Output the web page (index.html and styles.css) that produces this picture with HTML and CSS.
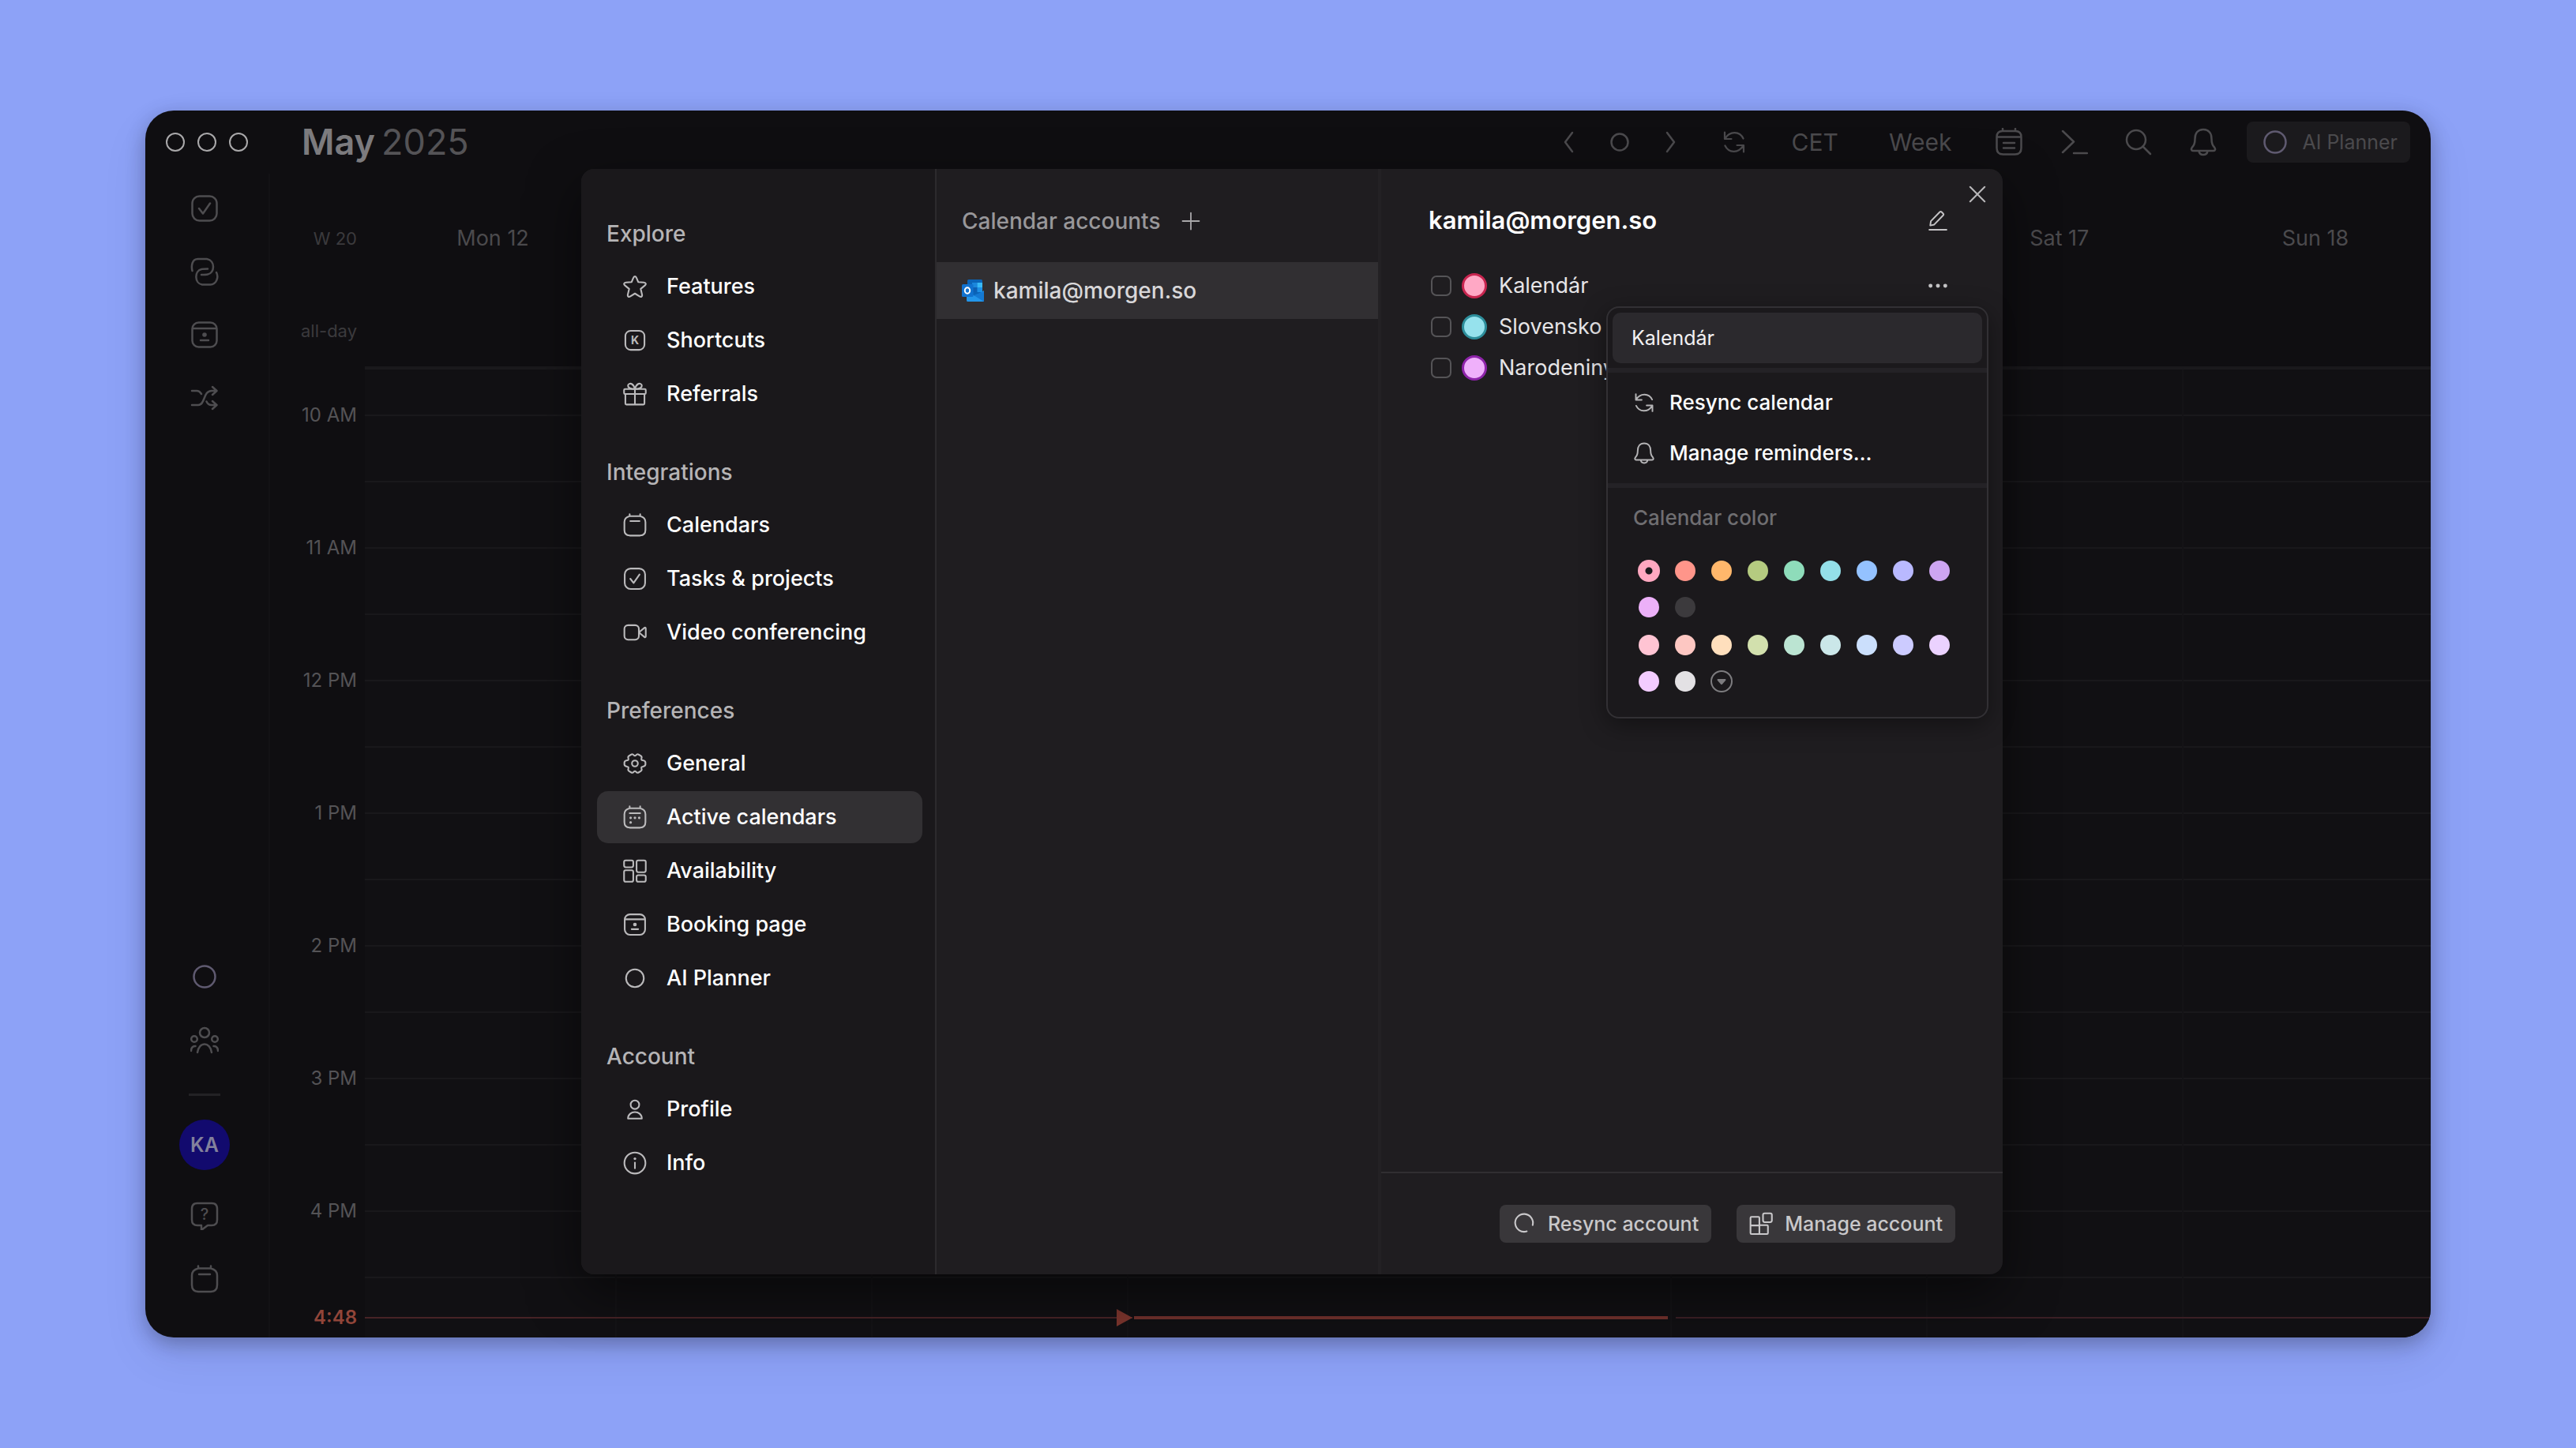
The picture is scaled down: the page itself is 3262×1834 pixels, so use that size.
FILE: index.html
```
<!DOCTYPE html>
<html lang="en">
<head>
    <meta charset="UTF-8">
    <meta name="viewport" content="width=device-width, initial-scale=1.0">
    <title>Active calendars - Morgen</title>
    <link rel="stylesheet" href="styles.css">
</head>
<body>
    <!-- Shared icons -->
    <svg class="sprite" aria-hidden="true">
        <symbol id="i-check" viewBox="0 0 36 36"><rect x="2.5" y="2.5" width="31" height="31" rx="9"/><path d="M11 18l5 6.5 9-13"/></symbol>
        <symbol id="i-link" viewBox="0 0 36 36"><path d="M2.500 17C1 11 2 2 9.500 2h11.500c11 2 10 18 1 19.500q-2 .5-8 .5M33 19c3.500 7-.5 15-7.500 15.500H15C5 33 5 17 14 15q2-.5 8-.5"/></symbol>
        <symbol id="i-booking" viewBox="0 0 36 36"><rect x="2.500" y="2.500" width="31" height="31" rx="8"/><path d="M3 10h30M13 25h10"/><circle class="dot" cx="18" cy="18" r="2.800"/></symbol>
        <symbol id="i-shuffle" viewBox="0 0 36 36"><path d="M2 9h6c3 0 4.500 1.500 6 4M2 27h8c9 0 6-18 17-18h6M28 4l5.500 5-5.500 5M20.500 22.500C22 26 24 27 27 27h6M28 22l5.500 5-5.500 5"/></symbol>
        <symbol id="i-ring" viewBox="0 0 36 36"><circle cx="18" cy="18" r="13.500"/></symbol>
        <symbol id="i-people" viewBox="0 0 36 36"><circle cx="18" cy="9" r="6"/><circle cx="5" cy="17" r="3.800"/><circle cx="31" cy="17" r="3.800"/><path d="M9 34c2-14 16-14 18 0M1 32c0-4 2-6 5.500-6M35 32c0-4-2-6-5.500-6"/></symbol>
        <symbol id="i-calendar" viewBox="0 0 36 36"><path d="M10 4.500h16q8 2 8 9v12q0 8-8 8.500H10q-8-.5-8-8.500v-12q0-7 8-9zM10 4.500V1.500M26 4.500V1.500M11 12h14"/></symbol>
        <symbol id="i-active" viewBox="0 0 36 36"><path d="M10 4.500h16q8 2 8 9v12q0 8-8 8.500H10q-8-.5-8-8.500v-12q0-7 8-9zM10 4.500V1.500M26 4.500V1.500M10 12h16"/><g class="dot"><circle cx="11.500" cy="19" r="1.900"/><circle cx="18" cy="19" r="1.900"/><circle cx="24.500" cy="19" r="1.900"/><circle cx="11.500" cy="26" r="1.900"/></g></symbol>
        <symbol id="i-left" viewBox="0 0 36 36"><path d="M22 6L13 18l9 12"/></symbol>
        <symbol id="i-right" viewBox="0 0 36 36"><path d="M14 6l9 12-9 12"/></symbol>
        <symbol id="i-dot" viewBox="0 0 36 36"><circle cx="18" cy="18" r="10.500"/></symbol>
        <symbol id="i-sync" viewBox="0 0 36 36"><path d="M4.500 4v9.500H14M5 13C12 1.500 26 2.500 31 13M31.500 32v-9.500H22M31 23C24 34.500 10 33.500 5 23"/></symbol>
        <symbol id="i-list" viewBox="0 0 36 36"><path d="M10 4h16q7.500 0 7.500 7.500v14q0 8-8 8h-15q-8 0-8-8v-14Q2.500 4 10 4zM10 4V1M26 4V1M3 11.500h30M11 19h14M11 25.500h14"/></symbol>
        <symbol id="i-terminal" viewBox="0 0 36 36"><path d="M4 4l14 13.500L4 31M18 32h17"/></symbol>
        <symbol id="i-search" viewBox="0 0 36 36"><circle cx="15" cy="15" r="12"/><path d="M23.500 23.500L33 33"/></symbol>
        <symbol id="i-bell" viewBox="0 0 36 36"><path d="M18 2C11 2 7.500 7 7.500 14c0 6-1 8-3.500 10.500-2 2.500-1 4.500 1 4.500h26c2 0 3-2 1-4.500C29.500 22 28.500 20 28.500 14 28.500 7 25 2 18 2zM12.500 29.500c1 6 10 6 11 0"/></symbol>
        <symbol id="i-star" viewBox="0 0 36 36"><path d="M18 2.500c1.500 0 2 1 2.500 2.500L23 11l8.500.8c3.500.4 4 2.400 1.500 4.600L26.800 21.500l2 8.500c.7 3-1.300 4.300-3.800 2.800L18 28.500l-7 4.300c-2.500 1.500-4.500.2-3.800-2.800l2-8.500L3 16.400C.5 14.200 1 12.200 4.500 11.800L13 11l2.500-6C16 3.500 16.500 2.500 18 2.500z"/></symbol>
        <symbol id="i-gift" viewBox="0 0 36 36"><rect x="1.500" y="10.500" width="33" height="7.500" rx="1.500"/><path d="M3.500 18v14.500q0 1.500 1.500 1.500h26q1.500 0 1.500-1.500V18M18 10.500V34M18 10.500C12 10.500 7.500 9 7.500 5.500 7.500 2.500 11 1.500 13.500 3 16 4.500 17 7 18 10.500zM18 10.500c6 0 10.500-1.500 10.500-5C28.500 2.500 25 1.500 22.500 3 20 4.500 19 7 18 10.500z"/></symbol>
        <symbol id="i-video" viewBox="0 0 36 36"><rect x="2" y="7" width="22" height="22" rx="5.500"/><path d="M24 18l8.500-7c1-.8 2-.5 2 1v12c0 1.500-1 1.800-2 1z"/></symbol>
        <symbol id="i-gear" viewBox="0 0 36 36"><path d="M12.200 4.500c1.600-1 3-.5 4 .8q1.800 2 3.600 0c1-1.300 2.400-1.800 4-.8l3.200 1.900c1.500 1 1.600 2.300 1 3.900q-.8 2.700 1.900 3c2 .3 3.900.8 4.100 3v3.400c-.2 2.200-2.100 2.700-4.100 3q-2.700.3-1.900 3c.6 1.600.5 2.900-1 3.900l-3.200 1.900c-1.600 1-3 .5-4-.8q-1.800-2-3.600 0c-1 1.300-2.400 1.800-4 .8L9 29.600c-1.500-1-1.600-2.300-1-3.900q.8-2.700-1.900-3c-2-.3-3.900-.8-4.100-3v-3.400c.2-2.200 2.100-2.700 4.100-3q2.700-.3 1.900-3c-.6-1.600-.5-2.900 1-3.900z"/><circle cx="18" cy="18" r="4.500"/></symbol>
        <symbol id="i-blocks" viewBox="0 0 36 36"><rect x="1.500" y="2" width="14" height="10.500" rx="2.500"/><rect x="20.500" y="2" width="14" height="18" rx="2.500"/><rect x="1.500" y="17" width="14" height="17.500" rx="2.500"/><rect x="20.500" y="24.500" width="14" height="10" rx="2.500"/></symbol>
        <symbol id="i-user" viewBox="0 0 36 36"><circle cx="18" cy="11" r="6.500"/><path d="M7.500 32c0-13 21-13 21 0z"/></symbol>
        <symbol id="i-info" viewBox="0 0 36 36"><circle cx="18" cy="18" r="16"/><path d="M18 17.500V26"/><circle class="dot" cx="18" cy="11.500" r="2"/></symbol>
        <symbol id="i-pencil" viewBox="0 0 36 36"><path d="M6.500 19.500L21 4.500q1.500-1.500 3 0l2.500 2.500q1.500 1.500 0 3L12 25l-6.500 1.500zM4 33.500h28"/></symbol>
        <symbol id="i-close" viewBox="0 0 36 36"><path d="M7 7l22 22M29 7L7 29"/></symbol>
        <symbol id="i-plus" viewBox="0 0 36 36"><path d="M18 3.500v29M3.500 18h29"/></symbol>
        <symbol id="i-more" viewBox="0 0 36 36"><g class="dot"><circle cx="6" cy="18" r="3.200"/><circle cx="18" cy="18" r="3.200"/><circle cx="30" cy="18" r="3.200"/></g></symbol>
        <symbol id="i-arc" viewBox="0 0 36 36"><path d="M31 20A13.500 13.500 0 1 0 22 29.500"/></symbol>
        <symbol id="i-manage" viewBox="0 0 36 36"><path d="M2 9q0-1.500 1.500-1.500H14q1.500 0 1.500 1.500v11H27q1.500 0 1.500 1.500V32q0 1.500-1.500 1.500H3.500Q2 33.500 2 32zM2 20.500h13.500v13"/><rect x="21" y="2" width="13.500" height="13.500" rx="2.500"/></symbol>
    </svg>

    <div class="window">
        <header class="topbar">
            <div class="lights"><span></span><span></span><span></span></div>
            <h1 class="month">May <span>2025</span></h1>
            <div class="toolbar">
                <button class="step" type="button" aria-label="Previous"><svg class="icon"><use href="#i-left"/></svg></button>
                <button class="step" type="button" aria-label="Today"><svg class="icon"><use href="#i-dot"/></svg></button>
                <button class="step" type="button" aria-label="Next"><svg class="icon"><use href="#i-right"/></svg></button>
                <button class="tool sync" type="button" aria-label="Sync"><svg class="icon"><use href="#i-sync"/></svg></button>
                <button class="pick" type="button">CET</button>
                <button class="pick" type="button">Week</button>
                <button class="tool" type="button" aria-label="Tasks"><svg class="icon"><use href="#i-list"/></svg></button>
                <button class="tool" type="button" aria-label="Commands"><svg class="icon"><use href="#i-terminal"/></svg></button>
                <button class="tool" type="button" aria-label="Search"><svg class="icon"><use href="#i-search"/></svg></button>
                <button class="tool" type="button" aria-label="Notifications"><svg class="icon"><use href="#i-bell"/></svg></button>
                <button class="planner" type="button"><svg class="icon tinted"><use href="#i-ring"/></svg>AI Planner</button>
            </div>
        </header>

        <div class="main">
            <nav class="rail">
                <a href="#" aria-label="Tasks"><svg class="icon"><use href="#i-check"/></svg></a>
                <a href="#" aria-label="Links"><svg class="icon"><use href="#i-link"/></svg></a>
                <a href="#" aria-label="Booking"><svg class="icon"><use href="#i-booking"/></svg></a>
                <a href="#" aria-label="Workflows"><svg class="icon"><use href="#i-shuffle"/></svg></a>
                <a class="bottom" href="#" aria-label="AI Planner"><svg class="icon tinted"><use href="#i-ring"/></svg></a>
                <a href="#" aria-label="Team"><svg class="icon"><use href="#i-people"/></svg></a>
                <hr>
                <a class="avatar" href="#">KA</a>
                <a href="#" aria-label="Help"><svg class="icon" viewBox="0 0 36 36"><path d="M9 2h18q7 0 7 7v14q0 7-7 7h-5l-8 6v-6H9q-7 0-7-7V9q0-7 7-7z"/><text x="18" y="23" text-anchor="middle">?</text></svg></a>
                <a href="#" aria-label="Calendar"><svg class="icon"><use href="#i-calendar"/></svg></a>
            </nav>

            <div class="calendar">
                <div class="week days">
                    <span class="gutter">W 20</span>
                    <div class="columns">
                        <span>Mon 12</span><span></span><span></span><span></span><span></span><span>Sat 17</span><span>Sun 18</span>
                    </div>
                </div>
                <div class="week allday">
                    <span class="gutter">all-day</span>
                    <div class="columns"></div>
                </div>
                <div class="week hours">
                    <div class="gutter">
                        <span>10 AM</span>
                        <span>11 AM</span>
                        <span>12 PM</span>
                        <span>1 PM</span>
                        <span>2 PM</span>
                        <span>3 PM</span>
                        <span>4 PM</span>
                    </div>
                    <div class="columns slots">
                        <i></i><i></i><i></i><i></i><i></i><i></i><i></i>
                    </div>
                    <div class="now">
                        <span class="gutter">4:48</span>
                        <div class="columns">
                            <i class="before"></i><i class="current"></i><i class="after"></i>
                        </div>
                    </div>
                </div>
            </div>
        </div>

        <!-- Settings dialog -->
        <div class="overlay">
            <div class="modal" role="dialog" aria-label="Settings">
                <nav class="settings">
                    <section>
                        <h2>Explore</h2>
                        <a href="#"><svg class="icon"><use href="#i-star"/></svg>Features</a>
                        <a href="#"><svg class="icon key" viewBox="0 0 36 36"><rect x="3.500" y="3.500" width="29" height="29" rx="8"/><text x="18" y="24" text-anchor="middle">K</text></svg>Shortcuts</a>
                        <a href="#"><svg class="icon"><use href="#i-gift"/></svg>Referrals</a>
                    </section>
                    <section>
                        <h2>Integrations</h2>
                        <a href="#"><svg class="icon"><use href="#i-calendar"/></svg>Calendars</a>
                        <a href="#"><svg class="icon"><use href="#i-check"/></svg>Tasks &amp; projects</a>
                        <a href="#"><svg class="icon"><use href="#i-video"/></svg>Video conferencing</a>
                    </section>
                    <section>
                        <h2>Preferences</h2>
                        <a href="#"><svg class="icon"><use href="#i-gear"/></svg>General</a>
                        <a class="active" href="#"><svg class="icon"><use href="#i-active"/></svg>Active calendars</a>
                        <a href="#"><svg class="icon"><use href="#i-blocks"/></svg>Availability</a>
                        <a href="#"><svg class="icon"><use href="#i-booking"/></svg>Booking page</a>
                        <a href="#"><svg class="icon"><use href="#i-ring"/></svg>AI Planner</a>
                    </section>
                    <section>
                        <h2>Account</h2>
                        <a href="#"><svg class="icon"><use href="#i-user"/></svg>Profile</a>
                        <a href="#"><svg class="icon"><use href="#i-info"/></svg>Info</a>
                    </section>
                </nav>

                <div class="accounts">
                    <div class="accounts-head">
                        <h2>Calendar accounts</h2>
                        <button type="button" aria-label="Add account"><svg class="icon"><use href="#i-plus"/></svg></button>
                    </div>
                    <a class="account" href="#">
                        <svg class="outlook" viewBox="0 0 28 28">
                            <rect x="7" y="0" width="19" height="22" rx="1.500" fill="#0a64b8"/>
                            <path d="M13 4h6.500v6H13z" fill="#1b87dc"/>
                            <path d="M19.500 4H26v6h-6.500z" fill="#38b9f6"/>
                            <path d="M13 10h6.500v6H13z" fill="#0d5fb3"/>
                            <path d="M19.500 10H26v6h-6.500z" fill="#1d90e6"/>
                            <path d="M6 15l11 6 11-7v12.500q0 1.500-1.500 1.500h-19Q6 28 6 26.500z" fill="#2396ea"/>
                            <path d="M15 20l13 8V15z" fill="#1479d2"/>
                            <rect x="0" y="6" width="14.500" height="16" rx="1.500" fill="#1172cf"/>
                            <ellipse cx="7" cy="14" rx="3.200" ry="3.800" fill="none" stroke="#fff" stroke-width="2"/>
                        </svg>
                        kamila@morgen.so
                    </a>
                </div>

                <div class="detail">
                    <button class="close" type="button" aria-label="Close"><svg class="icon"><use href="#i-close"/></svg></button>
                    <div class="detail-head">
                        <h2>kamila@morgen.so</h2>
                        <button type="button" aria-label="Rename"><svg class="icon"><use href="#i-pencil"/></svg></button>
                    </div>
                    <ul class="calendars">
                        <li>
                            <input type="checkbox" id="cal-1">
                            <span class="swatch pink"></span>
                            <label for="cal-1">Kalendár</label>
                            <button type="button" aria-label="More"><svg class="icon"><use href="#i-more"/></svg></button>
                        </li>
                        <li>
                            <input type="checkbox" id="cal-2">
                            <span class="swatch teal"></span>
                            <label for="cal-2">Slovensko</label>
                        </li>
                        <li>
                            <input type="checkbox" id="cal-3">
                            <span class="swatch purple"></span>
                            <label for="cal-3">Narodeniny</label>
                        </li>
                    </ul>
                    <div class="menu">
                        <div class="menu-name"><input type="text" value="Kalendár" aria-label="Calendar name"></div>
                        <div class="menu-actions">
                            <button type="button"><svg class="icon"><use href="#i-sync"/></svg>Resync calendar</button>
                            <button type="button"><svg class="icon"><use href="#i-bell"/></svg>Manage reminders…</button>
                        </div>
                        <div class="menu-colors">
                            <h3>Calendar color</h3>
                            <div class="palette">
                                <button class="c1 selected" type="button" aria-label="Pink"></button>
                                <button class="c2" type="button" aria-label="Coral"></button>
                                <button class="c3" type="button" aria-label="Orange"></button>
                                <button class="c4" type="button" aria-label="Olive"></button>
                                <button class="c5" type="button" aria-label="Green"></button>
                                <button class="c6" type="button" aria-label="Teal"></button>
                                <button class="c7" type="button" aria-label="Blue"></button>
                                <button class="c8" type="button" aria-label="Indigo"></button>
                                <button class="c9" type="button" aria-label="Violet"></button>
                                <button class="c10" type="button" aria-label="Purple"></button>
                                <button class="c11" type="button" aria-label="Graphite"></button>
                            </div>
                            <div class="palette">
                                <button class="l1" type="button" aria-label="Light pink"></button>
                                <button class="l2" type="button" aria-label="Light coral"></button>
                                <button class="l3" type="button" aria-label="Light orange"></button>
                                <button class="l4" type="button" aria-label="Light olive"></button>
                                <button class="l5" type="button" aria-label="Light green"></button>
                                <button class="l6" type="button" aria-label="Light teal"></button>
                                <button class="l7" type="button" aria-label="Light blue"></button>
                                <button class="l8" type="button" aria-label="Light indigo"></button>
                                <button class="l9" type="button" aria-label="Light violet"></button>
                                <button class="l10" type="button" aria-label="Light purple"></button>
                                <button class="l11" type="button" aria-label="Light gray"></button>
                                <button class="custom" type="button" aria-label="Custom color"><svg viewBox="0 0 28 28"><circle cx="14" cy="14" r="13"/><path d="M9 11h10q1 1 0 2l-4 4.500q-1 1-2 0L9 13q-1-1 0-2z"/></svg></button>
                            </div>
                        </div>
                    </div>
                    <footer class="detail-foot">
                        <button type="button"><svg class="icon"><use href="#i-arc"/></svg>Resync account</button>
                        <button type="button"><svg class="icon"><use href="#i-manage"/></svg>Manage account</button>
                    </footer>
                </div>
            </div>
        </div>
    </div>
</body>
</html>
```
FILE: styles.css
```
* {
    box-sizing: border-box;
}

body {
    margin: 0;
    min-height: 100vh;
    padding: 140px 184px;
    display: flex;
    background-color: #8da2f7;
    color: #fff;
    font-family: Inter, "Liberation Sans", sans-serif;
    font-size: 27px;
    line-height: 32px;
}

h1, h2, h3, ul {
    margin: 0;
    padding: 0;
}

a {
    color: inherit;
    text-decoration: none;
}

button {
    display: flex;
    align-items: center;
    justify-content: center;
    padding: 0;
    border: none;
    background: none;
    color: inherit;
    font: inherit;
    cursor: pointer;
}

.sprite {
    position: absolute;
    width: 0;
    height: 0;
}

.icon {
    width: 36px;
    height: 36px;
    flex: none;
    fill: none;
    stroke: currentColor;
    stroke-width: 2.5;
    stroke-linecap: round;
    stroke-linejoin: round;
}

.dot, .icon text {
    fill: currentColor;
    stroke: none;
}

.icon text {
    font-size: 20px;
    font-weight: 500;
}

.key text {
    font-size: 17px;
    font-weight: 700;
}

.tinted {
    color: #5f5a70;
}

.window {
    position: relative;
    flex: 1;
    display: flex;
    flex-direction: column;
    border-radius: 36px;
    background-color: #0f0e11;
    box-shadow: 0 8px 24px rgba(20, 20, 40, 0.3), 0 24px 60px rgba(20, 20, 40, 0.08);
}

/* Top bar */
.topbar {
    display: flex;
    align-items: center;
    height: 80px;
    padding: 0 26px;
    color: #4b4a4d;
}

.lights {
    display: flex;
    gap: 16px;
}

.lights span {
    width: 24px;
    height: 24px;
    border: 2px solid #aaa9ab;
    border-radius: 50%;
}

.month {
    display: flex;
    gap: 8px;
    margin-left: 68px;
    color: #7c7b7e;
    font-size: 45px;
    font-weight: 600;
    line-height: 56px;
}

.month span {
    color: #545356;
    font-weight: 400;
}

.toolbar {
    display: flex;
    align-items: center;
    margin-left: auto;
}

.step {
    width: 64px;
}

.tool {
    width: 82px;
}

.sync {
    margin: 0 32px 0 8px;
}

.sync .icon {
    width: 32px;
    height: 32px;
}

.pick {
    margin-right: 64px;
    font-size: 30px;
}

.pick + .tool {
    margin-left: -32px;
}

.planner {
    gap: 16px;
    height: 52px;
    margin-left: 14px;
    padding: 0 16px 0 18px;
    border-radius: 8px;
    background-color: #1b1a1d;
    font-size: 25px;
}

/* Left rail */
.main {
    flex: 1;
    display: flex;
    min-height: 0;
}

.rail {
    display: flex;
    flex-direction: column;
    align-items: center;
    width: 158px;
    padding: 4px 6px 34px 0;
    border-right: 2px solid #131215;
    color: #4e4d50;
}

.rail a {
    display: flex;
    align-items: center;
    justify-content: center;
    width: 80px;
    height: 80px;
}

.rail .bottom {
    margin-top: auto;
}

.rail hr {
    width: 40px;
    height: 3px;
    margin: 28px 0 30px;
    border: none;
    background-color: #232225;
}

.rail .avatar {
    width: 64px;
    height: 64px;
    margin-bottom: 18px;
    border-radius: 50%;
    background-color: #120a6e;
    color: #83819c;
    font-size: 25px;
    font-weight: 600;
}

/* Calendar behind the dialog */
.calendar {
    flex: 1;
    display: flex;
    flex-direction: column;
    overflow: hidden;
    border-radius: 0 0 36px 0;
}

.week {
    display: flex;
}

.gutter {
    width: 120px;
    flex: none;
    padding-right: 10px;
    color: #3b3a3d;
    font-size: 22px;
    text-align: right;
}

.columns {
    flex: 1;
    display: grid;
    grid-template-columns: 1fr 1fr 1fr 2.12fr 1fr 1fr 1fr;
    margin-right: -16px;
}

.days {
    align-items: center;
    height: 164px;
    color: #4b4a4d;
    text-align: center;
}

.allday {
    height: 84px;
}

.allday .gutter {
    padding-top: 19px;
}

.allday .columns {
    border-bottom: 4px solid #1a191c;
}

.hours {
    position: relative;
    flex: 1;
}

.hours .gutter {
    padding-top: 42px;
    color: #545356;
    font-size: 24px;
}

.hours .gutter span {
    display: block;
    margin-bottom: 136px;
}

.slots {
    background: #111013 linear-gradient(#19181b 2px, transparent 2px) 0 57px / 100% 84px;
}

.slots i {
    margin-right: 5px;
    border-right: 2px solid #141316;
}

.now {
    position: absolute;
    top: 1185px;
    left: 0;
    right: 0;
    display: flex;
    align-items: center;
}

.hours .now .gutter {
    padding-top: 0;
    color: #914539;
    font-weight: 600;
}

.now .columns {
    align-items: center;
}

.before {
    grid-column: span 3;
    display: flex;
    align-items: center;
    height: 2px;
    background-color: #472326;
}

.before::after {
    content: "";
    margin-left: auto;
    border: 11px solid transparent;
    border-left: 20px solid #7b352d;
    border-right: none;
}

.current {
    height: 4px;
    margin: 0 10px 0 2px;
    background-color: #6f302c;
}

.after {
    grid-column: span 3;
    height: 2px;
    background-color: #3b1f25;
}

/* Dialog */
.overlay {
    position: absolute;
    inset: 0;
    display: flex;
    padding: 74px 542px 80px 552px;
}

.modal {
    flex: 1;
    display: grid;
    grid-template-columns: 450px 563px 1fr;
    border-radius: 16px;
    background-color: #1f1d20;
    box-shadow: 0 24px 64px rgba(0, 0, 0, 0.5);
}

.settings {
    display: flex;
    flex-direction: column;
    gap: 30px;
    padding: 48px 16px 0 20px;
    border-right: 2px solid #2c2a2d;
    border-radius: 16px 0 0 16px;
    background-color: #1a181b;
    font-weight: 500;
}

.settings h2 {
    height: 68px;
    padding: 18px 12px;
    color: #b5b4b6;
    font-size: 28px;
    font-weight: 500;
}

.settings a {
    display: flex;
    align-items: center;
    gap: 25px;
    height: 66px;
    margin-bottom: 2px;
    padding-left: 33px;
    border-radius: 14px;
}

.settings .active {
    background-color: #323033;
}

.settings .icon {
    width: 30px;
    height: 30px;
    color: #bbbabc;
}

.accounts {
    border-right: 4px solid #232124;
}

.accounts-head {
    display: flex;
    align-items: center;
    gap: 26px;
    height: 118px;
    padding: 13px 32px 0;
    color: #98979a;
}

.accounts-head h2 {
    font-size: 28px;
    font-weight: 500;
}

.accounts-head .icon {
    width: 26px;
    height: 26px;
    color: #a9a8aa;
}

.account {
    display: flex;
    align-items: center;
    gap: 12px;
    height: 72px;
    padding: 0 32px;
    background-color: #312f32;
    color: #d8d7d9;
    font-size: 28px;
    font-weight: 500;
}

.outlook {
    width: 28px;
    height: 28px;
}

.detail {
    position: relative;
    display: flex;
    flex-direction: column;
    padding-top: 40px;
}

.close {
    position: absolute;
    top: 16px;
    right: 16px;
    width: 32px;
    height: 32px;
    color: #b9b8ba;
}

.close .icon {
    width: 30px;
    height: 30px;
}

.detail-head {
    display: flex;
    align-items: center;
    justify-content: space-between;
    height: 50px;
    padding: 0 68px 0 60px;
}

.detail-head h2 {
    font-size: 31px;
    font-weight: 600;
}

.detail-head .icon, .calendars .icon {
    width: 28px;
    height: 28px;
    color: #c4c3c5;
}

.calendars {
    margin-top: 32px;
    padding: 0 68px 0 63px;
    list-style: none;
}

.calendars li {
    display: flex;
    align-items: center;
    height: 52px;
    color: #e6e5e7;
}

.calendars input {
    appearance: none;
    width: 26px;
    height: 26px;
    margin: 0 13px 0 0;
    border: 2px solid #555457;
    border-radius: 7px;
}

.calendars button {
    margin-left: auto;
}

.swatch {
    width: 32px;
    height: 32px;
    margin-right: 15px;
    border: 3px solid;
    border-radius: 50%;
}

.pink {
    border-color: #c8254f;
    background-color: #ffa8c5;
}

.teal {
    border-color: #2d8e9b;
    background-color: #96e2ed;
}

.purple {
    border-color: #8e24aa;
    background-color: #efb0fb;
}

/* Calendar menu */
.menu {
    position: absolute;
    top: 174px;
    right: 18px;
    width: 484px;
    border: 2px solid #323034;
    border-radius: 16px;
    background-color: #1b191c;
    box-shadow: 0 8px 32px rgba(0, 0, 0, 0.4);
    font-size: 25px;
}

.menu-name {
    padding: 6px;
    border-bottom: 6px solid #242226;
}

.menu-name input {
    width: 100%;
    height: 64px;
    padding: 0 24px;
    border: none;
    border-radius: 10px;
    background-color: #2b292d;
    color: #f2f1f3;
    font: inherit;
}

.menu-actions {
    padding: 6px 0;
    border-bottom: 6px solid #242226;
    font-size: 26px;
    font-weight: 500;
}

.menu-actions button {
    gap: 18px;
    height: 64px;
    padding-left: 32px;
}

.menu-actions .icon {
    width: 28px;
    height: 28px;
    color: #b5b4b6;
}

.menu-colors {
    padding: 22px 32px 20px;
}

.menu-colors h3 {
    margin-bottom: 28px;
    color: #6f6e71;
    font-size: 26px;
    font-weight: 500;
}

.palette {
    display: grid;
    grid-template-columns: repeat(9, 46px);
    grid-auto-rows: 46px;
    align-items: center;
    justify-items: center;
    margin: 0 -4px 2px -3px;
}

.palette button {
    width: 26px;
    height: 26px;
    border-radius: 50%;
}

.palette .selected {
    width: 28px;
    height: 28px;
    background: radial-gradient(circle, #1b191c 4px, #ffa8c0 5px);
}

.c2 { background-color: #ff958a; }
.c3 { background-color: #ffb76b; }
.c4 { background-color: #b5cb80; }
.c5 { background-color: #8edcba; }
.c6 { background-color: #94dfe8; }
.c7 { background-color: #94c2ff; }
.c8 { background-color: #b9b9ff; }
.c9 { background-color: #cda5f1; }
.c10 { background-color: #ecb0f8; }
.c11 { background-color: #3c3a3d; }
.l1 { background-color: #ffc4d3; }
.l2 { background-color: #fdc7c2; }
.l3 { background-color: #ffdfbd; }
.l4 { background-color: #d2e0ad; }
.l5 { background-color: #bbe4d2; }
.l6 { background-color: #cbe7e9; }
.l7 { background-color: #cbdffc; }
.l8 { background-color: #cccbff; }
.l9 { background-color: #ebd2ff; }
.l10 { background-color: #f3ccff; }
.l11 { background-color: #e3e1e4; }

.palette .custom {
    width: 28px;
    height: 28px;
}

.custom circle {
    fill: none;
    stroke: #7d7c7f;
    stroke-width: 2;
}

.custom path {
    fill: #7d7c7f;
}

.detail-foot {
    display: flex;
    justify-content: flex-end;
    gap: 32px;
    margin-top: auto;
    padding: 40px 60px;
    border-top: 2px solid #302e31;
}

.detail-foot button {
    gap: 15px;
    height: 48px;
    padding: 0 16px;
    border-radius: 8px;
    background-color: #39373a;
    color: #c9c8ca;
    font-size: 25px;
    font-weight: 500;
}

.detail-foot .icon {
    width: 30px;
    height: 30px;
}
```
